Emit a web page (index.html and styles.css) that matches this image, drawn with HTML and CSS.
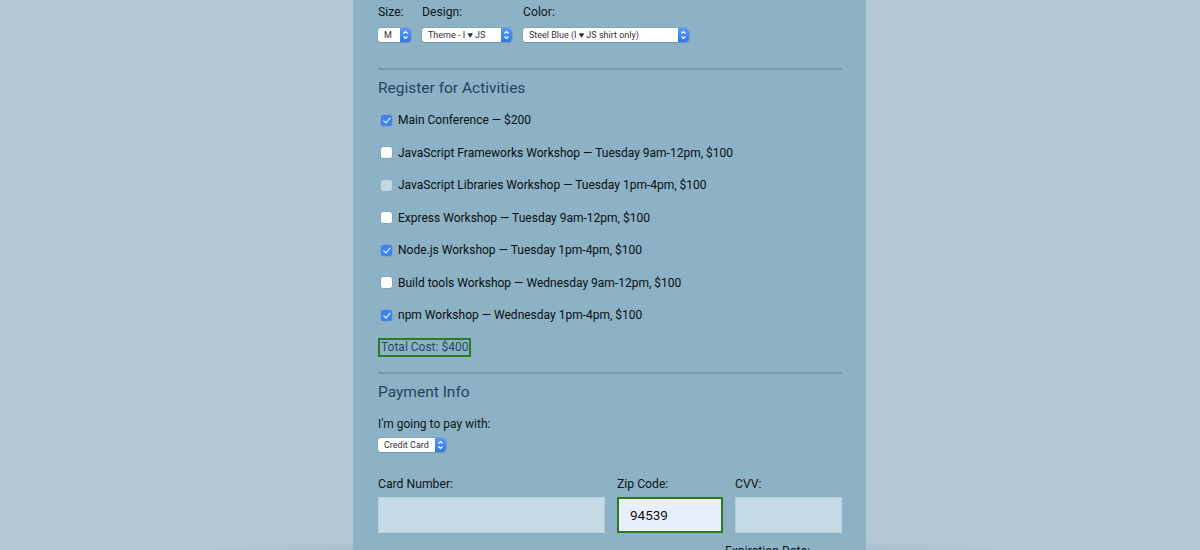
FILE: index.html
```html
<!DOCTYPE html>
<html>
<head>
<meta charset="utf-8">
<link rel="stylesheet" href="styles.css">
</head>
<body>
<main class="panel">
  <div class="shirt-row">
    <div class="field">
      <span class="lbl">Size:</span>
      <span class="select w-size"><span class="val">M</span><span class="step"><svg viewBox="0 0 11 14" width="11" height="14"><path d="M3.5 5.5 5.5 3.5 7.5 5.5M3.5 8.5 5.5 10.5 7.5 8.5" fill="none" stroke="#fff" stroke-width="1.2"/></svg></span></span>
    </div>
    <div class="field">
      <span class="lbl">Design:</span>
      <span class="select w-design"><span class="val">Theme - I ♥ JS</span><span class="step"><svg viewBox="0 0 11 14" width="11" height="14"><path d="M3.5 5.5 5.5 3.5 7.5 5.5M3.5 8.5 5.5 10.5 7.5 8.5" fill="none" stroke="#fff" stroke-width="1.2"/></svg></span></span>
    </div>
    <div class="field">
      <span class="lbl">Color:</span>
      <span class="select w-color"><span class="val">Steel Blue (I ♥ JS shirt only)</span><span class="step"><svg viewBox="0 0 11 14" width="11" height="14"><path d="M3.5 5.5 5.5 3.5 7.5 5.5M3.5 8.5 5.5 10.5 7.5 8.5" fill="none" stroke="#fff" stroke-width="1.2"/></svg></span></span>
    </div>
  </div>

  <hr class="rule rule-1">

  <h2 class="heading">Register for Activities</h2>
  <ul class="activities">
    <li><span class="box checked"></span>Main Conference — $200</li>
    <li><span class="box"></span>JavaScript Frameworks Workshop — Tuesday 9am-12pm, $100</li>
    <li><span class="box disabled"></span>JavaScript Libraries Workshop — Tuesday 1pm-4pm, $100</li>
    <li><span class="box"></span>Express Workshop — Tuesday 9am-12pm, $100</li>
    <li><span class="box checked"></span>Node.js Workshop — Tuesday 1pm-4pm, $100</li>
    <li><span class="box"></span>Build tools Workshop — Wednesday 9am-12pm, $100</li>
    <li><span class="box checked"></span>npm Workshop — Wednesday 1pm-4pm, $100</li>
  </ul>
  <div class="total">Total Cost: $400</div>

  <hr class="rule rule-2">

  <h2 class="heading">Payment Info</h2>
  <p class="pay-lbl">I'm going to pay with:</p>
  <span class="select w-pay"><span class="val">Credit Card</span><span class="step"><svg viewBox="0 0 11 14" width="11" height="14"><path d="M3.5 5.5 5.5 3.5 7.5 5.5M3.5 8.5 5.5 10.5 7.5 8.5" fill="none" stroke="#fff" stroke-width="1.2"/></svg></span></span>

  <div class="card-row">
    <div class="cfield c-num"><span class="lbl">Card Number:</span><span class="input"></span></div>
    <div class="cfield c-zip"><span class="lbl">Zip Code:</span><span class="input focus">94539</span></div>
    <div class="cfield c-cvv"><span class="lbl">CVV:</span><span class="input"></span></div>
  </div>
  <div class="exp-row"><span class="lbl">Expiration Date:</span></div>
</main>
</body>
</html>
```
FILE: styles.css
```css
html, body {
  margin: 0;
  padding: 0;
  height: 550px;
  overflow: hidden;
}
body {
  background:
    radial-gradient(ellipse 470px 22px at 606px 560px, rgba(90,120,140,0.45), rgba(90,120,140,0) 100%),
    #b2c8d5;
  font-family: Roboto, "Liberation Sans", sans-serif;
  color: #111;
}
.panel {
  width: 464px;
  margin-left: 353px;
  padding: 4px 24px 40px 25px;
  background: #8db2c6;
  min-height: 600px;
}
.lbl {
  display: block;
  font-size: 12.2px;
  line-height: 16px;
  color: #0f1417;
}
.shirt-row {
  display: flex;
  gap: 11px;
}
.field .lbl { margin-bottom: 3px; }
.select {
  display: inline-flex;
  align-items: stretch;
  height: 14px;
  background: #fff;
  border-radius: 3px;
  box-shadow: 0 0 0 0.5px rgba(0,0,0,0.15), 0 1px 1px rgba(0,0,0,0.12);
  overflow: hidden;
  font-size: 9px;
  line-height: 14px;
  color: #333;
}
.select .val {
  flex: 1;
  padding-left: 6px;
  white-space: nowrap;
  overflow: hidden;
}
.select .step {
  width: 11px;
  background: linear-gradient(#5a9bf7, #2f76ec);
  display: flex;
}
.w-size { width: 33px; }
.w-design { width: 90px; }
.w-color { width: 166px; }
.w-pay { width: 68px; }

.rule {
  border: 0;
  height: 2px;
  background: #7399ad;
  margin: 0;
}
.rule-1 { margin-top: 26px; }
.heading {
  margin: 8px 0 0;
  font-size: 15.5px;
  font-weight: 400;
  line-height: 20px;
  color: #1c475f;
}
.activities {
  list-style: none;
  margin: 6px 0 0;
  padding: 0;
}
.activities li {
  display: flex;
  align-items: center;
  height: 32.5px;
  font-size: 12px;
  color: #0a0d0f;
}
.box {
  width: 11px;
  height: 11px;
  border-radius: 2.5px;
  background: #fff;
  margin: 0 6px 0 3px;
  box-shadow: 0 0 0 0.5px rgba(0,0,0,0.12);
  position: relative;
}
.box.disabled { background: #c8d7df; box-shadow: none; }
.box.checked {
  background: #3d83f3;
}
.box.checked::after {
  content: "";
  position: absolute;
  left: 3.6px;
  top: 1.2px;
  width: 2.6px;
  height: 5.6px;
  border: solid #fff;
  border-width: 0 1.5px 1.5px 0;
  transform: rotate(40deg);
}
.total {
  display: inline-block;
  margin-top: 6px;
  border: 2px solid #2f7a1e;
  font-size: 12px;
  line-height: 15px;
  padding: 0 1px;
  color: #1f4b63;
}
.rule-2 { margin-top: 15px; }
.pay-lbl {
  margin: 14px 0 6px;
  font-size: 12px;
  line-height: 16px;
  color: #0f1417;
}
.w-pay { vertical-align: top; }
.card-row {
  display: flex;
  gap: 12px;
  margin-top: 19px;
}
.cfield .lbl { margin-bottom: 5px; }
.input {
  display: block;
  height: 36px;
  box-sizing: border-box;
  background: #c5dbe7;
  border: 1px solid #b7cfdc;
  font-size: 13.5px;
  line-height: 34px;
  padding-left: 11px;
  color: #111;
}
.input.focus {
  background: #e8effb;
  border: 2px solid #2b7a1c;
  line-height: 32px;
}
.c-num { width: 227px; }
.c-zip { width: 106px; }
.c-cvv { width: 107px; }
.exp-row {
  margin-top: 10px;
  padding-left: 347px;
}
```
